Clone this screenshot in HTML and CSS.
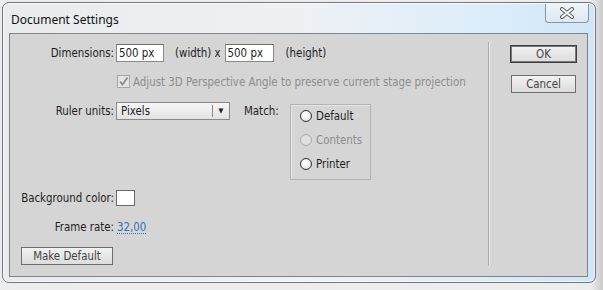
FILE: index.html
```html
<!DOCTYPE html>
<html>
<head>
<meta charset="utf-8">
<link rel="stylesheet" href="styles.css">
</head>
<body>
<div class="window">
  <div class="titlebar">
    <span class="title">Document Settings</span>
    <div class="close">
      <svg width="16" height="12" viewBox="0 0 16 12">
        <path d="M3 2 L13 10 M13 2 L3 10" stroke="#5a5f66" stroke-width="4" stroke-linecap="round" fill="none"/>
        <path d="M3 2 L13 10 M13 2 L3 10" stroke="#ffffff" stroke-width="2" stroke-linecap="round" fill="none"/>
      </svg>
    </div>
  </div>
  <div class="content">
    <div class="main">
      <div class="row row-dim">
        <span class="label">Dimensions:</span>
        <span class="input w1">500 px</span>
        <span class="txt t-width">(width) x</span>
        <span class="input w2">500 px</span>
        <span class="txt t-height">(height)</span>
      </div>
      <div class="row row-check">
        <span class="checkbox">
          <svg width="11" height="11" viewBox="0 0 11 11"><path d="M2 5.5 L4.5 8.5 L9.5 1.5" stroke="#8c8c8c" stroke-width="1.8" fill="none"/></svg>
        </span>
        <span class="disabled">Adjust 3D Perspective Angle to preserve current stage projection</span>
      </div>
      <div class="row row-ruler">
        <span class="label">Ruler units:</span>
        <span class="select"><span class="sel-text">Pixels</span><span class="sel-arrow">&#9660;</span></span>
        <span class="match">Match:</span>
        <div class="group">
          <div class="radio-row"><span class="radio"></span><span>Default</span></div>
          <div class="radio-row disabled"><span class="radio off"></span><span>Contents</span></div>
          <div class="radio-row"><span class="radio"></span><span>Printer</span></div>
        </div>
      </div>
      <div class="row row-bg">
        <span class="label">Background color:</span>
        <span class="swatch"></span>
      </div>
      <div class="row row-fr">
        <span class="label">Frame rate:</span>
        <span class="link">32,00</span>
      </div>
      <div class="row row-btn">
        <span class="button make">Make Default</span>
      </div>
    </div>
    <div class="sep"></div>
    <div class="side">
      <span class="button ok">OK</span>
      <span class="button cancel">Cancel</span>
    </div>
  </div>
</div>
</body>
</html>
```

FILE: styles.css
```css
html, body {
  margin: 0;
  padding: 0;
}
body {
  width: 603px;
  height: 290px;
  background: linear-gradient(90deg, #ededed 0%, #ededed 98%, #c9c9c9 100%);
  font-family: "DejaVu Sans Condensed", "DejaVu Sans", sans-serif;
  font-size: 11.4px;
  color: #1e1e1e;
  overflow: hidden;
}
.window {
  margin: 2px 0 0 2px;
  width: 594px;
  height: 281px;
  box-sizing: border-box;
  border: 1px solid #6f7780;
  border-radius: 7px;
  background: linear-gradient(90deg, #e9ebed 0%, #eef1f4 50%, #e0eef9 75%, #cfe7f8 100%);
  box-shadow: inset 0 0 0 1px rgba(255,255,255,0.7);
}
.titlebar {
  height: 30px;
  display: flex;
  justify-content: space-between;
  align-items: flex-start;
}
.title {
  font-family: "Noto Sans", "Open Sans", sans-serif;
  font-size: 12px;
  color: #111;
  margin: 8px 0 0 8px;
}
.close {
  width: 44px;
  height: 19px;
  margin: 1px 6px 0 0;
  box-sizing: border-box;
  border: 1px solid #8a949e;
  border-top: none;
  border-radius: 0 0 4px 4px;
  background: linear-gradient(180deg, #eef4f9, #dde9f3);
  display: flex;
  align-items: center;
  justify-content: center;
}
.content {
  margin-left: 6px;
  width: 579px;
  height: 244px;
  box-sizing: border-box;
  border: 1px solid #7f8489;
  background: #d5d5d5;
  display: flex;
}
.main {
  width: 478px;
  padding: 10px 0 0 10px;
  box-sizing: border-box;
  display: flex;
  flex-direction: column;
}
.row {
  display: flex;
  align-items: center;
}
.label {
  width: 94px;
  text-align: right;
  margin-right: 2px;
  white-space: nowrap;
}
.row-dim { height: 18px; }
.input {
  height: 18px;
  box-sizing: border-box;
  border: 1px solid #8a8a8a;
  border-top-color: #6e6e6e;
  background: #fff;
  padding: 1px 0 0 2px;
  line-height: 15px;
  color: #222;
}
.w1 { width: 48px; }
.w2 { width: 49px; }
.t-width { margin-left: 11px; }
.w2 { margin-left: 4px; }
.t-height { margin-left: 12px; }
.row-check {
  margin-top: 13px;
  height: 13px;
}
.checkbox {
  margin-left: 97px;
  width: 13px;
  height: 13px;
  box-sizing: border-box;
  border: 1px solid #a6a6a6;
  background: #e4e4e4;
  display: flex;
  align-items: center;
  justify-content: center;
}
.disabled { color: #8d8d8d; }
.row-check .disabled { margin-left: 3px; }
.row-ruler {
  margin-top: 14px;
  align-items: flex-start;
  height: 78px;
}
.row-ruler .label, .match { line-height: 18px; }
.select {
  width: 114px;
  height: 18px;
  box-sizing: border-box;
  border: 1px solid #8a8a8a;
  background: linear-gradient(180deg, #f6f6f6, #e3e3e3);
  display: flex;
  align-items: center;
}
.sel-text {
  flex: 1;
  padding-left: 4px;
  line-height: 16px;
}
.sel-arrow {
  width: 16px;
  border-left: 1px solid #8a8a8a;
  height: 12px;
  font-size: 7px;
  line-height: 12px;
  text-align: center;
  color: #222;
}
.match {
  margin-left: 14px;
  width: 46px;
}
.group {
  margin-top: 2px;
  width: 81px;
  height: 76px;
  box-sizing: border-box;
  border: 1px solid #b3b3b3;
  box-shadow: inset 1px 1px 0 #e6e6e6;
  padding: 4px 0 0 9px;
  display: flex;
  flex-direction: column;
  gap: 11px;
}
.radio-row {
  display: flex;
  align-items: center;
  height: 13px;
}
.radio {
  width: 12px;
  height: 12px;
  box-sizing: border-box;
  border-radius: 50%;
  border: 1px solid #2e2e2e;
  background: radial-gradient(circle at 40% 35%, #ffffff, #dcdcdc);
  margin-right: 4px;
}
.radio.off {
  border-color: #a8a8a8;
  background: #e0e0e0;
}
.row-bg {
  margin-top: 10px;
  height: 16px;
}
.swatch {
  width: 19px;
  height: 16px;
  box-sizing: border-box;
  border: 1px solid #6a6a6a;
  background: #fff;
}
.row-fr {
  margin-top: 14px;
  height: 14px;
}
.link {
  color: #2f6fb8;
  border-bottom: 1px dotted #2f6fb8;
  line-height: 12px;
  margin-left: 1px;
}
.row-btn {
  margin-top: 13px;
}
.button {
  box-sizing: border-box;
  border: 1px solid #6e6e6e;
  background: linear-gradient(180deg, #f2f2f2, #dcdcdc);
  color: #444;
  display: flex;
  align-items: center;
  justify-content: center;
}
.make {
  margin-left: 1px;
  width: 92px;
  height: 18px;
}
.sep {
  width: 1px;
  margin-top: 8px;
  height: 223px;
  background: #a9a9a9;
  box-shadow: 1px 0 0 #ececec;
}
.side {
  display: flex;
  flex-direction: column;
  align-items: flex-start;
  padding-top: 11px;
}
.ok {
  margin-left: 21px;
  width: 67px;
  height: 18px;
  border-color: #3c3c3c;
  box-shadow: inset 0 0 0 1px #7a7a7a;
}
.cancel {
  margin-left: 22px;
  margin-top: 12px;
  width: 65px;
  height: 18px;
}
```
